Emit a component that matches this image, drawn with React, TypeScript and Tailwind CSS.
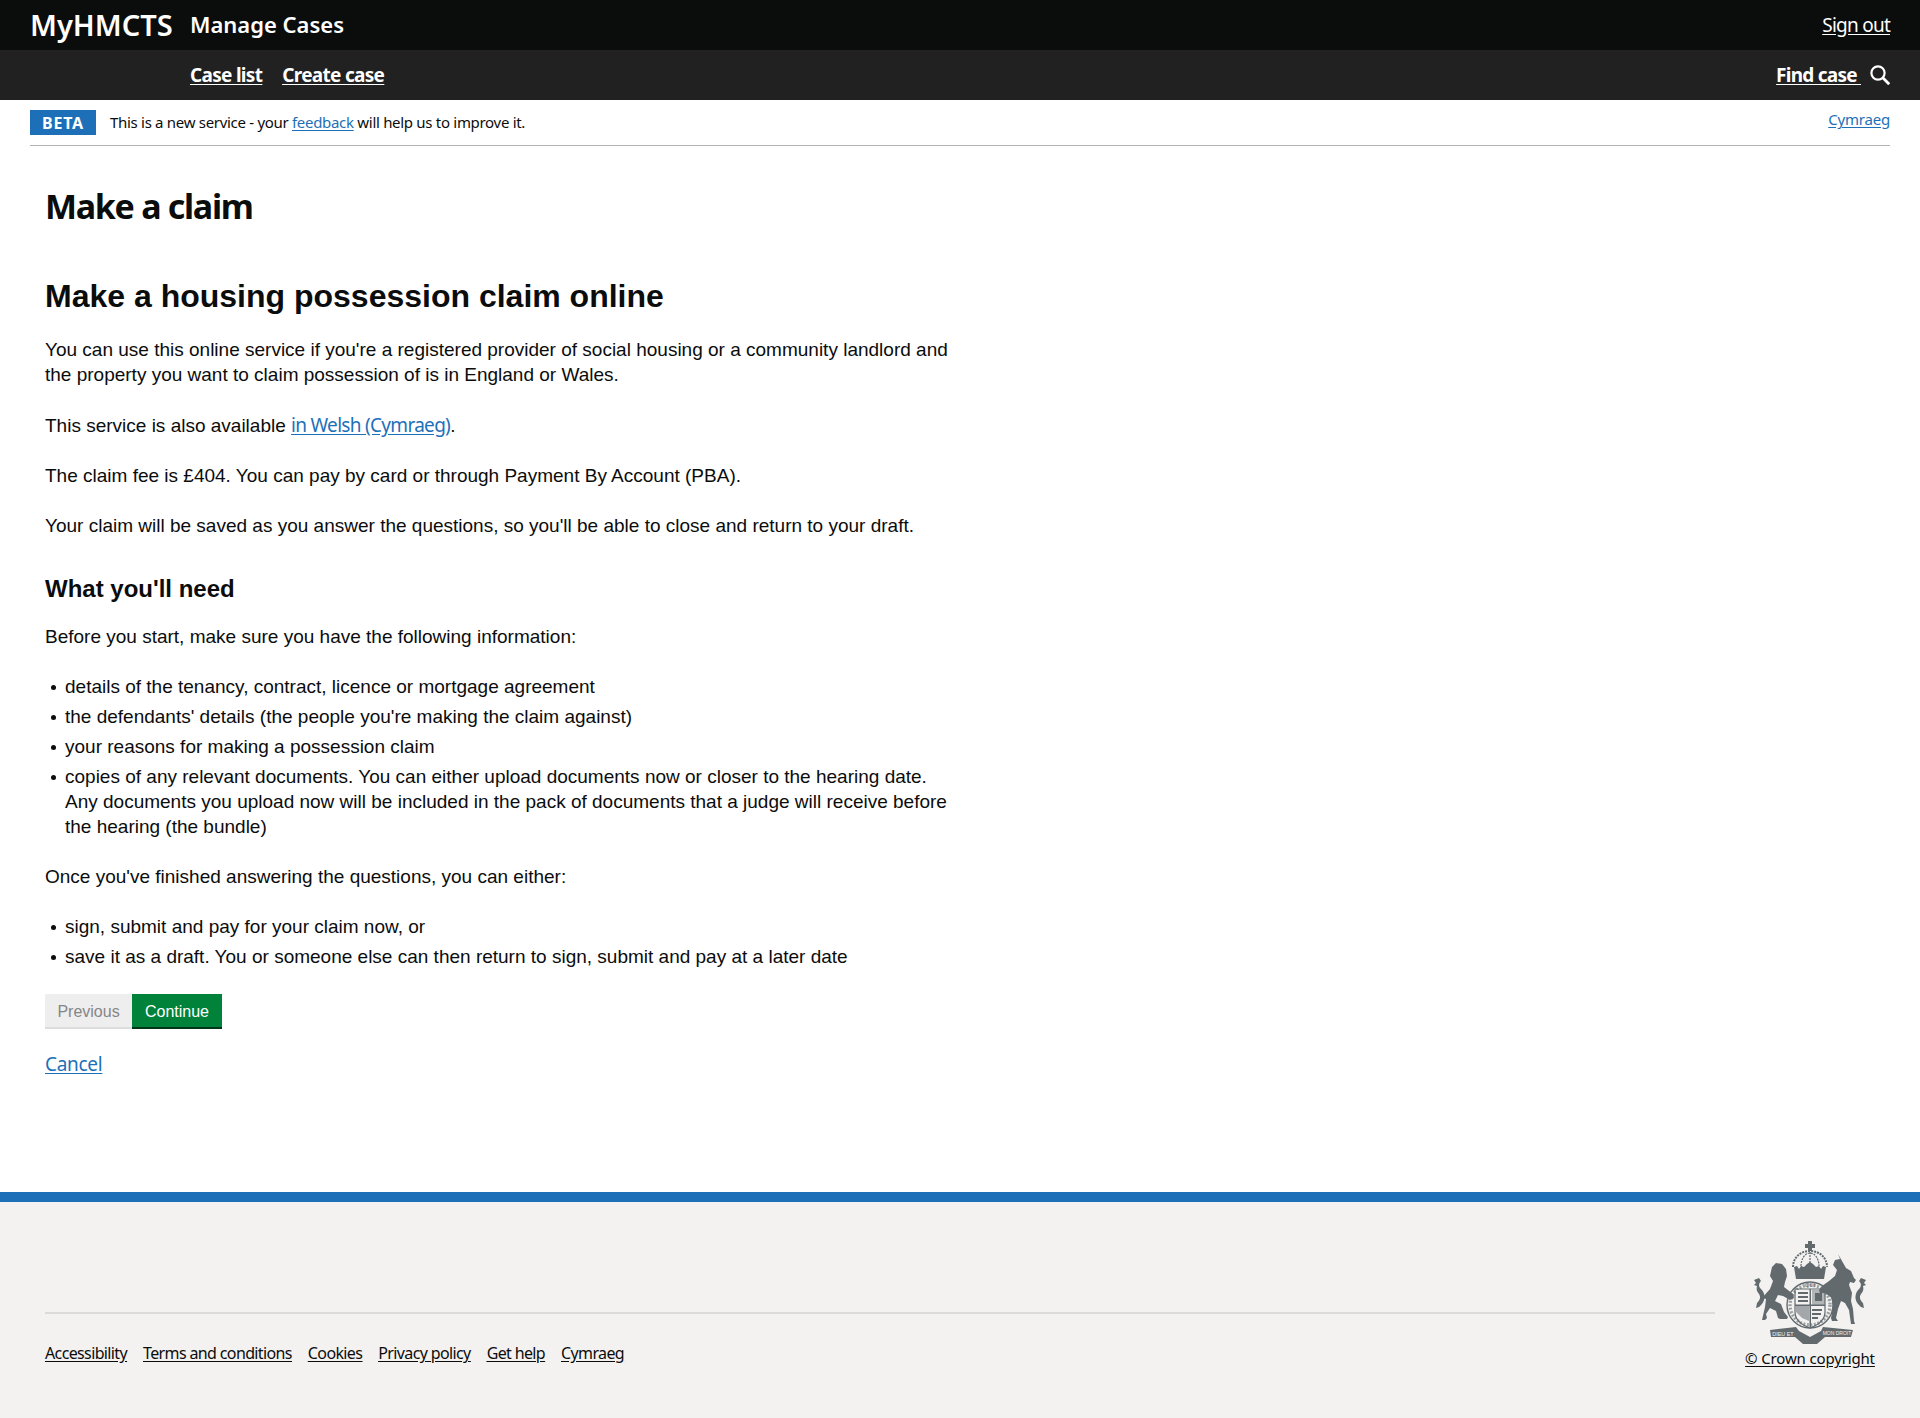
import React from 'react';

const sans = 'font-["Liberation_Sans",Arial,sans-serif]';
const gds = 'font-["Noto_Sans",sans-serif]';
const bullet =
  'relative before:absolute before:left-[-14px] before:top-[11px] before:w-[5px] before:h-[5px] before:rounded-full before:bg-[#0b0c0c]';

// coat of arms, drawn roughly at the size it has in the footer
const Crest: React.FC = () => (
  <svg width="116" height="105" viewBox="4 4 116 105" fill="#626a6e" aria-hidden="true">
    {/* crown */}
    <path d="M60 4h4v3h3v4h-3v3h-4v-3h-3V7h3z" />
    <path d="M45 30c0-9 7-16 17-16s17 7 17 16" fill="none" stroke="#626a6e" strokeWidth="2" strokeDasharray="2 1" />
    <path d="M53 29c0-7 4-13 9-13s9 6 9 13M62 15v14" fill="none" stroke="#626a6e" strokeWidth="1.2" strokeDasharray="2 1" />
    <path d="M46 30l3-1 2 3 2-3 3 1 3-3 3-2 3 2 3 3 3-1 2 3 2-3 3 1-2 12H48z" />
    {/* garter */}
    <circle cx="62" cy="68" r="23" fill="#f3f2f1" stroke="#626a6e" strokeWidth="1.4" />
    <circle cx="62" cy="68" r="20" fill="none" stroke="#626a6e" strokeWidth="3.4" strokeDasharray="2 1.6" opacity=".6" />
    <text x="62" y="50" textAnchor="middle" fontSize="6" fontFamily="Liberation Sans, sans-serif">QUI</text>
    {/* shield */}
    <path d="M48 53h14v15H48zM48 70h14v14l-8-3-6-6z" fill="#f3f2f1" />
    <path d="M50 55h10v2H50zM50 59h10v2H50zM50 63h10v2H50zM64 72h10v2H64zM64 76h9v2h-9zM64 80h6v2h-6z" />
    <path d="M64 53h13v15H64z" opacity=".45" />
    <path d="M67 56h7v8h-7z" />
    <path d="M48 69h13v15l-7-3-6-6z" opacity=".55" />
    <path d="M47 52h30v23c0 8-7 13-15 16-8-3-15-8-15-16z" fill="none" stroke="#626a6e" strokeWidth="1.2" />
    <path d="M61.5 52h1.5v38h-1.5zM47 67.5h30v1.5H47z" />
    {/* lion */}
    <path d="M24 30l4-4 6 1 4 5 1 7-2 6-1 5 9 7 1 4-4 2-7-4-5-1-3 6 6 3 3 8 4 5-1 2h-7l-2-1-2-7-6-3-4 6 1 4-2 2H14l3-13 1-8-4-1 8-9 3-8-3-5z" />
    <path d="M14 67c4-5 3-11-1-15-3-3-2-6 0-8l-2-3-5 2 2 3-2 2 3 1c-1 3 0 6 2 8 2 3 1 6-2 9l-1 5 3-1z" />
    {/* unicorn */}
    <path d="M90 17l8 14 5 3 3 7 2 2-2 3-4-1-1 3 3 8-1 8 2 8 1 12 1 3h-4l-2-14-4-7-4-2-3 8-2 9 2 3h-6l-1-3 2-11-1-9-7-5-5 0-1-3 3-4 7-5 6-5 2-6-4-5 2-5 5-1z" />
    <path d="M110 67c-4-5-3-11 1-15 3-3 2-6 0-8l2-3 5 2-2 3 2 2-3 1c1 3 0 6-2 8-2 3-1 6 2 9l1 5-3-1z" />
    {/* motto */}
    <path d="M22 93l26-3 3 4 11 6 11-6 2-4 30 3-2 7H77l-8 7H55l-8-7H23z" />
    <text x="35" y="98.5" textAnchor="middle" fontSize="5.4" fill="#f3f2f1" fontFamily="Liberation Sans, sans-serif">DIEU ET</text>
    <text x="89" y="98" textAnchor="middle" fontSize="5" fill="#f3f2f1" fontFamily="Liberation Sans, sans-serif">MON DROIT</text>
  </svg>
);

const footerLinks = ['Accessibility', 'Terms and conditions', 'Cookies', 'Privacy policy', 'Get help', 'Cymraeg'];

const App: React.FC = () => {
  return (
    <div className={`min-h-[1418px] flex flex-col bg-white text-[#0b0c0c] ${sans}`}>
      <header className={`${gds} text-white`}>
        <div className="h-[50px] bg-[#0b0c0c] px-[30px] flex items-center justify-between">
          <div className="flex items-center">
            <span className="text-[29px] font-semibold w-[160px] tracking-[0px]">MyHMCTS</span>
            <span className="text-[22px] font-semibold -mt-[1px]">Manage Cases</span>
          </div>
          <a className="text-[19px] underline underline-offset-2 tracking-[-0.75px]">Sign out</a>
        </div>
        <div className="h-[50px] bg-[#212121] pl-[190px] pr-[30px] flex items-center justify-between">
          <nav className="flex gap-5 text-[19px] font-bold tracking-[-0.7px] underline underline-offset-2">
            <a>Case list</a>
            <a>Create case</a>
          </nav>
          <div className="flex items-center gap-[9px]">
            <a className="text-[19px] font-bold tracking-[-0.75px] underline underline-offset-2 whitespace-pre">Find case </a>
            <svg width="20" height="20" viewBox="0 0 20 20" fill="none" stroke="currentColor" strokeWidth="2.2" aria-hidden="true">
              <circle cx="8" cy="8" r="6.6" />
              <path d="M12.8 12.8l6.4 6.4" strokeWidth="2.8" />
            </svg>
          </div>
        </div>
      </header>

      <div className={`${gds} mx-[30px] h-[46px] border-b border-[#b1b4b6] flex items-start justify-between`}>
        <div className="flex items-center mt-[10px]">
          <span className="w-[66px] h-[25px] bg-[#1d70b8] text-white text-[16px] font-bold tracking-[0.8px] flex items-center justify-center">BETA</span>
          <p className="ml-[14px] text-[15px] tracking-[-0.3px]">
            This is a new service - your <a className="text-[#1d70b8] underline underline-offset-2">feedback</a> will help us to improve it.
          </p>
        </div>
        <a className="mt-[8px] text-[15px] tracking-[-0.2px] text-[#1d70b8] underline underline-offset-2">Cymraeg</a>
      </div>

      <main className="flex-1 px-[45px]">
        <h1 className={`${gds} mt-[36px] text-[34px] leading-[48px] font-bold tracking-[-1.3px]`}>Make a claim</h1>
        <div className="w-[910px]">
          <h2 className="mt-[46px] text-[32px] leading-[40px] font-bold">Make a housing possession claim online</h2>
          <div className="text-[19px] leading-[25px]">
            <p className="mt-[21px]">
              You can use this online service if you're a registered provider of social housing or a community landlord and the property you want to claim possession of is in England or Wales.
            </p>
            <p className="mt-[26px]">
              This service is also available <a className={`${gds} text-[#1d70b8] underline underline-offset-2 tracking-[-0.7px]`}>in Welsh (Cymraeg)</a>.
            </p>
            <p className="mt-[25px]">The claim fee is £404. You can pay by card or through Payment By Account (PBA).</p>
            <p className="mt-[25px]">Your claim will be saved as you answer the questions, so you'll be able to close and return to your draft.</p>
            <h3 className="mt-[32px] text-[24px] leading-[38px] font-bold">What you'll need</h3>
            <p className="mt-[16px]">Before you start, make sure you have the following information:</p>
            <ul className="mt-[25px] pl-[20px] space-y-[5px]">
              <li className={bullet}>details of the tenancy, contract, licence or mortgage agreement</li>
              <li className={bullet}>the defendants' details (the people you're making the claim against)</li>
              <li className={bullet}>your reasons for making a possession claim</li>
              <li className={bullet}>copies of any relevant documents. You can either upload documents now or closer to the hearing date. Any documents you upload now will be included in the pack of documents that a judge will receive before the hearing (the bundle)</li>
            </ul>
            <p className="mt-[25px]">Once you've finished answering the questions, you can either:</p>
            <ul className="mt-[25px] pl-[20px] space-y-[5px]">
              <li className={bullet}>sign, submit and pay for your claim now, or</li>
              <li className={bullet}>save it as a draft. You or someone else can then return to sign, submit and pay at a later date</li>
            </ul>
          </div>
          <div className="mt-[25px] flex text-[16px]">
            <button className="h-[35px] w-[87px] pt-[2px] bg-[#eeeeef] border-b-2 border-[#dcdddf] text-[#858686]">Previous</button>
            <button className="h-[35px] w-[90px] pt-[2px] bg-[#00823b] border-b-2 border-[#003618] text-white">Continue</button>
          </div>
          <a className={`${gds} block mt-[23px] text-[19px] leading-[25px] text-[#1d70b8] underline underline-offset-2 tracking-[-0.3px]`}>Cancel</a>
        </div>
      </main>

      <footer className={`${gds} h-[226px] bg-[#f3f2f1] border-t-[10px] border-[#1d70b8] px-[45px] flex`}>
        <div className="flex-1 mt-[110px]">
          <div className="border-t-2 border-[#dbdad9]" />
          <div className="mt-[29px] flex gap-[16px] text-[16px] leading-[20px] tracking-[-0.63px] underline underline-offset-2">
            {footerLinks.map(link => (
              <a key={link}>{link}</a>
            ))}
          </div>
        </div>
        <div className="w-[160px] flex flex-col items-end">
          <div className="mt-[39px] w-[130px] flex flex-col items-center">
            <Crest />
            <a className="mt-[2px] text-[15px] leading-[20px] tracking-[-0.15px] underline underline-offset-2 whitespace-nowrap">© Crown copyright</a>
          </div>
        </div>
      </footer>
    </div>
  );
};

export default App;
